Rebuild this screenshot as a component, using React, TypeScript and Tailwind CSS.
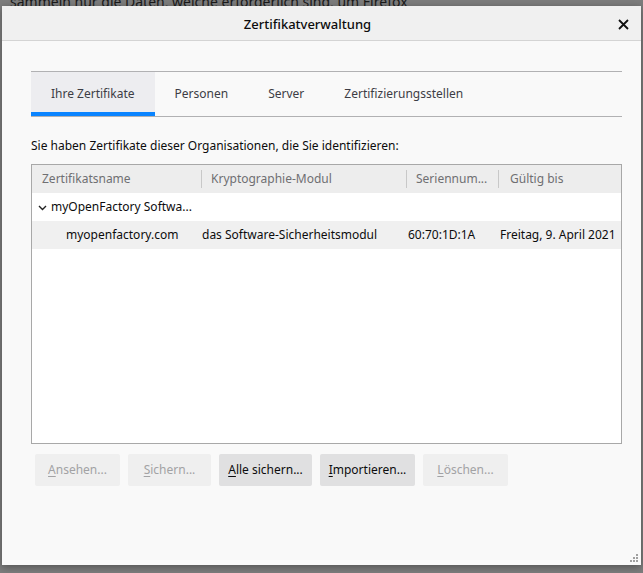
import React from "react";

const font = { fontFamily: '"Noto Sans", "Open Sans", sans-serif' };

const tabs = ["Ihre Zertifikate", "Personen", "Server", "Zertifizierungsstellen"];

const buttons = [
  { label: "Ansehen...", key: "A", rest: "nsehen...", enabled: false, w: "w-[85px]" },
  { label: "Sichern...", key: "S", rest: "ichern...", enabled: false, w: "w-[83px]" },
  { label: "Alle sichern...", key: "A", rest: "lle sichern...", enabled: true, w: "w-[93px]" },
  { label: "Importieren...", key: "I", rest: "mportieren...", enabled: true, w: "w-[95px]" },
  { label: "Löschen...", key: "L", rest: "öschen...", enabled: false, w: "w-[85px]" },
];

const App: React.FC = () => {
  return (
    <div
      className="relative w-[643px] h-[573px] overflow-hidden bg-[#7d7d7d] pt-[6px] pl-[2px]"
      style={font}
    >
      {/* page behind the dialog */}
      <div className="absolute left-[10px] top-[-9px] text-[14px] text-[#1a1a1a] whitespace-nowrap">
        sammeln nur die Daten, welche erforderlich sind, um Firefox
      </div>

      <div className="relative w-[639px] h-[559px] bg-[#f9f9f9] flex flex-col shadow-[0_2px_8px_rgba(0,0,0,0.35)]">
        {/* Title bar */}
        <div className="relative h-[35px] shrink-0 bg-[#f0f0f0] border-b border-[#d4d4d4] flex items-center justify-center pr-[28px] pt-[4px]">
          <span className="text-[13px] text-[#0c0c0d] font-medium">Zertifikatverwaltung</span>
          <svg
            className="absolute right-[12px] top-[13px]"
            width="11"
            height="11"
            viewBox="0 0 11 11"
          >
            <path d="M1 1 L10 10 M10 1 L1 10" stroke="#111" strokeWidth="1.8" />
          </svg>
        </div>

        {/* Body */}
        <div className="flex flex-col pl-[29px] pr-[19px] pt-[30px] flex-1">
          {/* Tabs */}
          <div className="flex border-t border-b border-[#b1b1b3] h-[46px]">
            {tabs.map((t, i) => (
              <div
                key={t}
                className={
                  i === 0
                    ? "h-full px-[20px] flex items-center bg-[#ededf0] border-b-[4px] border-[#0a84ff] pt-[4px] text-[12px] text-[#3d3d45]"
                    : "h-full px-[20px] flex items-center text-[12px] text-[#3d3d45]"
                }
              >
                {t}
              </div>
            ))}
          </div>

          <div className="mt-[20px] h-[18px] flex items-center text-[12px] text-[#0c0c0d]">
            Sie haben Zertifikate dieser Organisationen, die Sie identifizieren:
          </div>

          {/* Tree */}
          <div className="mt-[9px] h-[280px] border border-[#a8a8a8] bg-white flex flex-col">
            <div className="flex h-[28px] bg-[#ededed] text-[12px] text-[#6f6f72] items-center">
              <div className="w-[169px] pl-[10px]">Zertifikatsname</div>
              <div className="w-[205px] pl-[9px] border-l border-[#c8c8c8] h-[18px] flex items-center">
                Kryptographie-Modul
              </div>
              <div className="w-[92px] pl-[9px] border-l border-[#c8c8c8] h-[18px] flex items-center whitespace-nowrap overflow-hidden">
                Seriennum...
              </div>
              <div className="flex-1 pl-[11px] border-l border-[#c8c8c8] h-[18px] flex items-center">
                Gültig bis
              </div>
            </div>
            <div className="flex h-[28px] items-center text-[12px] text-[#0c0c0d] pl-[6px]">
              <svg width="9" height="6" viewBox="0 0 9 6" className="mr-[4px] mt-[1px]">
                <path d="M1 1 L4.5 4.5 L8 1" stroke="#222" strokeWidth="1.4" fill="none" />
              </svg>
              myOpenFactory Softwa...
            </div>
            <div className="flex h-[28px] items-center bg-[#f0f0f0] text-[12px] text-[#0c0c0d] whitespace-nowrap">
              <div className="w-[169px] pl-[34px]">myopenfactory.com</div>
              <div className="w-[205px] pl-[1px]">das Software-Sicherheitsmodul</div>
              <div className="w-[92px] pl-[2px]">60:70:1D:1A</div>
              <div className="flex-1 pl-[2px] overflow-hidden">Freitag, 9. April 2021</div>
            </div>
          </div>

          {/* Buttons */}
          <div className="flex gap-[8px] mt-[10px] pl-[4px]">
            {buttons.map((b) => (
              <div
                key={b.label}
                className={
                  (b.enabled
                    ? "bg-[#e0e0e1] text-[#0c0c0d] "
                    : "bg-[#efefef] text-[#a2a2a4] ") +
                  b.w +
                  " h-[32px] rounded-[2px] flex items-center justify-center text-[12px]"
                }
              >
                <span>
                  <span className="underline underline-offset-2">{b.key}</span>
                  {b.rest}
                </span>
              </div>
            ))}
          </div>
        </div>

        {/* Resize grip */}
        <svg className="absolute right-[2px] bottom-[2px]" width="9" height="9" viewBox="0 0 9 9">
          <rect x="6" y="0" width="2" height="2" fill="#a0a0a0" />
          <rect x="3" y="3" width="2" height="2" fill="#a0a0a0" />
          <rect x="6" y="3" width="2" height="2" fill="#a0a0a0" />
          <rect x="0" y="6" width="2" height="2" fill="#a0a0a0" />
          <rect x="3" y="6" width="2" height="2" fill="#a0a0a0" />
          <rect x="6" y="6" width="2" height="2" fill="#a0a0a0" />
        </svg>
      </div>
    </div>
  );
};

export default App;
